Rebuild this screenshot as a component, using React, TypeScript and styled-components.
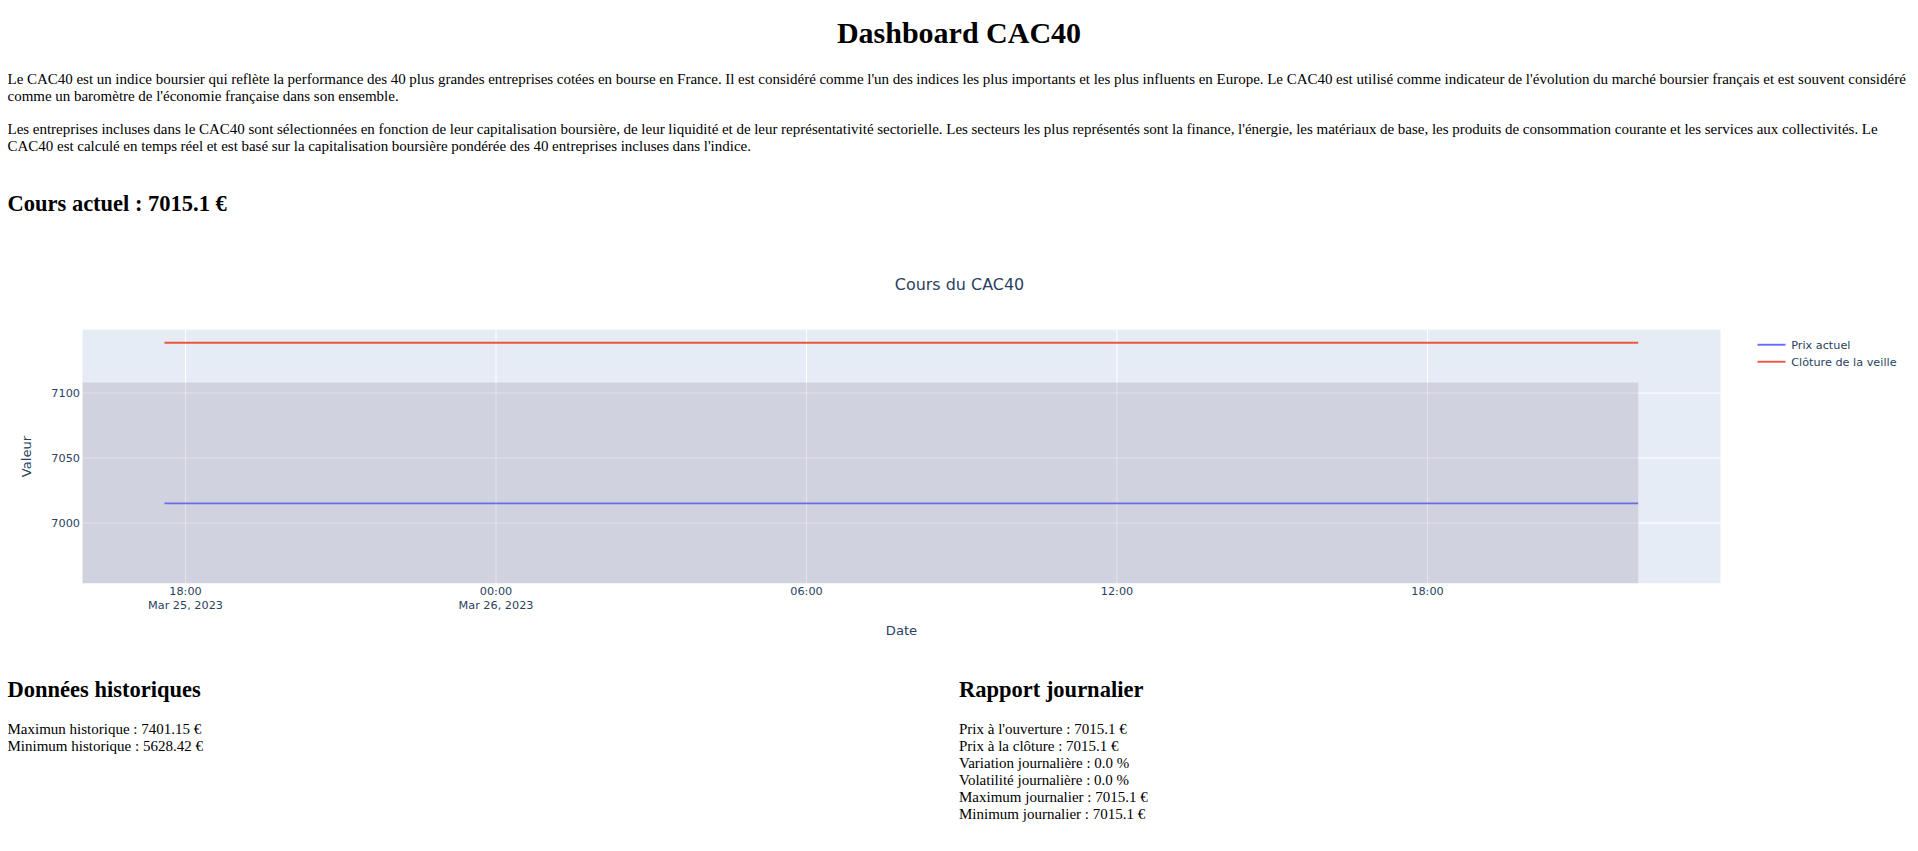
import React from 'react';
import styled, { createGlobalStyle } from 'styled-components';

const GlobalStyle = createGlobalStyle`
  html, body { margin: 0; padding: 0; background: #ffffff; }
  body {
    font-family: "Liberation Serif", "Times New Roman", serif;
    color: #000000;
  }
`;

const Page = styled.div`
  display: flex;
  flex-direction: column;
  padding: 0 7.5px 40px;
`;

const Title = styled.h1`
  margin: 16.2px 0 0;
  font-size: 30px;
  line-height: 34px;
  font-weight: bold;
  text-align: center;
`;

const Paragraph = styled.p<{ $gap: number }>`
  margin: ${(p) => p.$gap}px 0 0;
  font-size: 15px;
  line-height: 17px;
  word-spacing: -0.12px;
`;

const SectionTitle = styled.h2<{ $gap: number }>`
  margin: ${(p) => p.$gap}px 0 0;
  font-size: 22.5px;
  line-height: 26px;
  font-weight: bold;
`;

const ChartFrame = styled.div`
  margin-top: 19.15px;
  height: 422px;
`;

const ChartSvg = styled.svg`
  display: block;
  width: 1903px;
  height: 422px;
  font-family: "DejaVu Sans", Verdana, sans-serif;
`;

const Columns = styled.div`
  display: grid;
  grid-template-columns: 1fr 1fr;
  margin-top: 18.45px;
`;

const Column = styled.section`
  display: flex;
  flex-direction: column;
`;

const StatList = styled.div`
  margin-top: 18.7px;
  display: flex;
  flex-direction: column;
  font-size: 15px;
  line-height: 17px;
`;

const Stat = styled.div``;

const TEXT = '#2a3f5f';
const PLOT = { left: 82, right: 1720, top: 330, bottom: 583.5 };
const yScale = (v: number) => 523.3 - (v - 7000) * 1.3;
const xScale = (h: number) => 185 + h * (310.5 / 6); // h = hours since Mar 25 18:00

const xTicks = [
  { h: 0, label: '18:00', sub: 'Mar 25, 2023' },
  { h: 6, label: '00:00', sub: 'Mar 26, 2023' },
  { h: 12, label: '06:00' },
  { h: 18, label: '12:00' },
  { h: 24, label: '18:00' },
];
const yTicks = [7100, 7050, 7000];

const seriesStart = 164;
const seriesEnd = 1637.7;

const legend = [
  { color: '#636efa', label: 'Prix actuel', y: 345 },
  { color: '#ef553b', label: 'Clôture de la veille', y: 362 },
];

function CacChart() {
  return (
    <ChartSvg viewBox="7.5 236.25 1903 422" width={1903} height={422}>
      <text x={959} y={289.8} textAnchor="middle" fontSize={15.94} fill={TEXT}>
        Cours du CAC40
      </text>
      <rect
        x={PLOT.left}
        y={PLOT.top}
        width={PLOT.right - PLOT.left}
        height={PLOT.bottom - PLOT.top}
        fill="#e5ecf6"
      />
      {xTicks.map((t) => (
        <line
          key={`gx${t.h}`}
          x1={xScale(t.h)}
          x2={xScale(t.h)}
          y1={PLOT.top}
          y2={PLOT.bottom}
          stroke="#ffffff"
          strokeWidth={1}
        />
      ))}
      {yTicks.map((v) => (
        <line
          key={`gy${v}`}
          x1={PLOT.left}
          x2={PLOT.right}
          y1={yScale(v)}
          y2={yScale(v)}
          stroke="#ffffff"
          strokeWidth={1}
        />
      ))}
      <line x1={seriesStart} x2={seriesEnd} y1={yScale(7015.1)} y2={yScale(7015.1)} stroke="#636efa" strokeWidth={1.9} />
      <line x1={seriesStart} x2={seriesEnd} y1={yScale(7138.7)} y2={yScale(7138.7)} stroke="#ef553b" strokeWidth={1.9} />
      <rect
        x={PLOT.left}
        y={yScale(7108)}
        width={seriesEnd - PLOT.left}
        height={PLOT.bottom - yScale(7108)}
        fill="rgb(124,111,141)"
        fillOpacity={0.2}
      />
      {yTicks.map((v) => (
        <text key={`ty${v}`} x={79.5} y={yScale(v) + 4.1} textAnchor="end" fontSize={11.25} fill={TEXT}>
          {v}
        </text>
      ))}
      {xTicks.map((t) => (
        <g key={`tx${t.h}`}>
          <text x={xScale(t.h)} y={595.1} textAnchor="middle" fontSize={11.25} fill={TEXT}>
            {t.label}
          </text>
          {t.sub && (
            <text x={xScale(t.h)} y={609.6} textAnchor="middle" fontSize={11.25} fill={TEXT}>
              {t.sub}
            </text>
          )}
        </g>
      ))}
      <text x={(PLOT.left + PLOT.right) / 2} y={634.8} textAnchor="middle" fontSize={13.125} fill={TEXT}>
        Date
      </text>
      <text
        transform="translate(30.5 456.75) rotate(-90)"
        textAnchor="middle"
        fontSize={13.125}
        fill={TEXT}
      >
        Valeur
      </text>
      {legend.map((l) => (
        <g key={l.label}>
          <line x1={1757} x2={1785} y1={l.y} y2={l.y} stroke={l.color} strokeWidth={1.9} />
          <text x={1790.7} y={l.y + 4.1} fontSize={11.25} fill={TEXT}>
            {l.label}
          </text>
        </g>
      ))}
    </ChartSvg>
  );
}

const historique = ['Maximun historique : 7401.15 €', 'Minimum historique : 5628.42 €'];
const journalier = [
  "Prix à l'ouverture : 7015.1 €",
  'Prix à la clôture : 7015.1 €',
  'Variation journalière : 0.0 %',
  'Volatilité journalière : 0.0 %',
  'Maximum journalier : 7015.1 €',
  'Minimum journalier : 7015.1 €',
];

export default function App() {
  return (
    <>
      <GlobalStyle />
      <Page>
        <Title>Dashboard CAC40</Title>
        <Paragraph $gap={21.3}>
          Le CAC40 est un indice boursier qui reflète la performance des 40 plus grandes entreprises cotées en bourse
          en France. Il est considéré comme l'un des indices les plus importants et les plus influents en Europe. Le
          CAC40 est utilisé comme indicateur de l'évolution du marché boursier français et est souvent considéré comme
          un baromètre de l'économie française dans son ensemble.
        </Paragraph>
        <Paragraph $gap={16}>
          Les entreprises incluses dans le CAC40 sont sélectionnées en fonction de leur capitalisation boursière, de
          leur liquidité et de leur représentativité sectorielle. Les secteurs les plus représentés sont la finance,
          l'énergie, les matériaux de base, les produits de consommation courante et les services aux collectivités. Le
          CAC40 est calculé en temps réel et est basé sur la capitalisation boursière pondérée des 40 entreprises
          incluses dans l'indice.
        </Paragraph>
        <SectionTitle $gap={35.6}>Cours actuel : 7015.1 €</SectionTitle>
        <ChartFrame>
          <CacChart />
        </ChartFrame>
        <Columns>
          <Column>
            <SectionTitle $gap={0}>Données historiques</SectionTitle>
            <StatList>
              {historique.map((s) => (
                <Stat key={s}>{s}</Stat>
              ))}
            </StatList>
          </Column>
          <Column>
            <SectionTitle $gap={0}>Rapport journalier</SectionTitle>
            <StatList>
              {journalier.map((s) => (
                <Stat key={s}>{s}</Stat>
              ))}
            </StatList>
          </Column>
        </Columns>
      </Page>
    </>
  );
}
